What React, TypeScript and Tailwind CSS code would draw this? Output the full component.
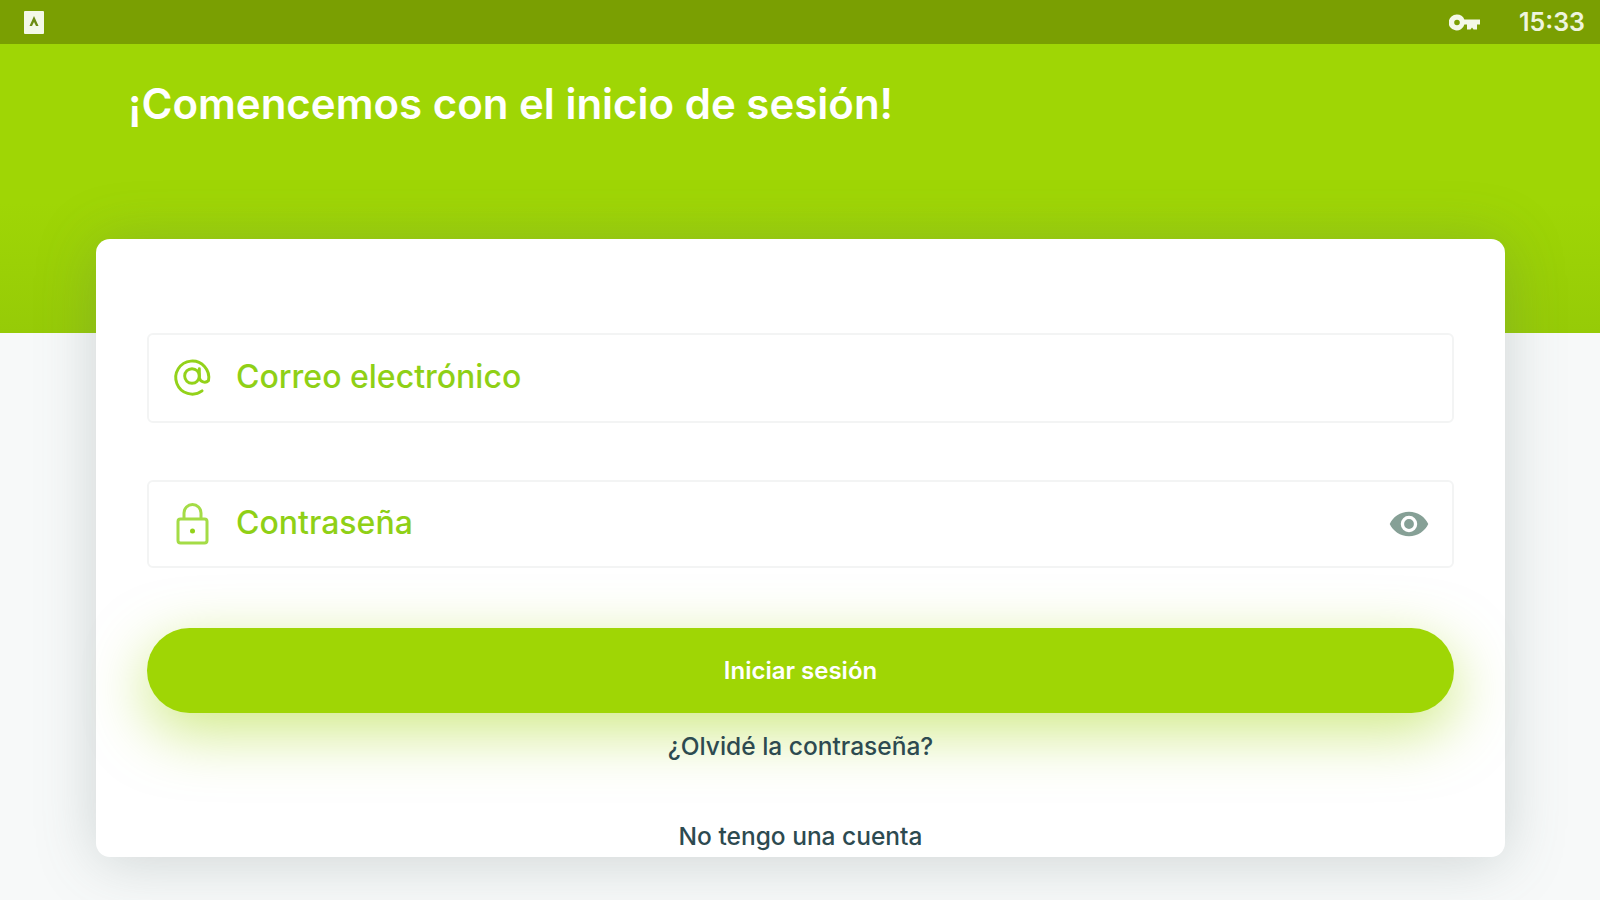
export default function App() {
  return (
    <div className="w-[1600px] h-[900px] overflow-hidden bg-[#f7f9f9] flex flex-col font-['Inter',sans-serif]">
      <div className="h-[44px] shrink-0 bg-[#7a9f02] flex items-center justify-between pl-[23px] pr-[15px]">
        <svg width="22" height="25" viewBox="0 0 22 25" className="block">
          <path d="M2 1h18a1 1 0 0 1 1 1v21a1 1 0 0 1-1 1H2a1 1 0 0 1-1-1V2a1 1 0 0 1 1-1z" fill="#f4f8e8" />
          <path d="M11 6l4.500 10h-2.500L11 12l-2 4H6.500z" fill="#6d8c14" />
        </svg>
        <div className="flex items-center gap-[39px]">
          <svg width="31" height="17" viewBox="0 0 31 17" className="block">
            <path fillRule="evenodd" d="M8 0.500a8 8 0 0 1 7.400 5H31v5h-3v5h-3.500l-1.500-2-1.500 2H18v-5h-2.600A8 8 0 1 1 8 0.500zm0 5.200a2.800 2.800 0 1 0 0 5.600 2.800 2.800 0 0 0 0-5.600z" fill="#f4f8e8" />
          </svg>
          <span className="text-[25px] leading-none font-semibold text-[#eef4de]">15:33</span>
        </div>
      </div>
      <div className="h-[289px] shrink-0 bg-[linear-gradient(to_bottom,#9fd605_0%,#9fd605_55%,#96cb07_100%)] pl-[128px] pt-[36px]">
        <h1 className="text-[42px] leading-[48px] font-semibold text-white m-0">¡Comencemos con el inicio de sesión!</h1>
      </div>
      <div className="relative ml-[96px] mr-[95px] -mt-[94px] h-[618px] shrink-0 rounded-[14px] bg-white shadow-[0_4px_60px_rgba(90,110,110,0.26)] px-[51px] pt-[94px] flex flex-col items-stretch">
        <div className="h-[90px] rounded-[6px] border-2 border-[#f3f4f4] flex items-center pl-[21px] pr-[22px]">
          <svg width="44" height="44" viewBox="0 0 24 24" fill="none" stroke="#93d21a" strokeWidth="1.6" strokeLinecap="round" strokeLinejoin="round" className="block shrink-0 -mt-[4px]">
            <circle cx="12" cy="12" r="4" />
            <path d="M16 8v5a3 3 0 0 0 5 1.500 9 9 0 1 0-3.500 5.600" />
          </svg>
          <span className="ml-[22px] text-[32px] font-medium text-[#8fd016] leading-none -mt-[3px]">Correo electrónico</span>
        </div>
        <div className="mt-[57px] h-[88px] rounded-[6px] border-2 border-[#f3f4f4] flex items-center pl-[23px] pr-[22px]">
          <svg width="42" height="42" viewBox="0 0 42 42" fill="none" stroke="#a4dc46" strokeWidth="3" className="block shrink-0">
            <rect x="6" y="16" width="29" height="24" rx="2.500" />
            <path d="M12 16v-6a8.500 8.500 0 0 1 17 0v6" />
            <circle cx="20.500" cy="28" r="2.500" fill="#93d21a" stroke="none" />
          </svg>
          <span className="ml-[22px] text-[32px] font-medium text-[#8fd016] leading-none -mt-[3px]">Contraseña</span>
          <svg width="42" height="42" viewBox="0 0 24 24" className="block shrink-0 ml-auto">
            <path fillRule="evenodd" d="M12 5C7 5 2.700 8.100 1 12c1.700 3.900 6 7 11 7s9.300-3.100 11-7c-1.700-3.900-6-7-11-7zm0 11.700a4.700 4.700 0 1 1 0-9.400 4.700 4.700 0 0 1 0 9.400zM12 9.200a2.800 2.800 0 1 0 0 5.600 2.800 2.800 0 0 0 0-5.600z" fill="#86a096" />
          </svg>
        </div>
        <button className="mt-[60px] h-[85px] rounded-full bg-[#9fd605] shadow-[0_18px_60px_rgba(159,214,5,0.5)] text-white text-[24px] font-semibold border-0 flex items-center justify-center">
          Iniciar sesión
        </button>
        <p className="mt-[18px] text-center text-[24.500px] leading-[30px] font-medium text-[#2d4a50] m-0">¿Olvidé la contraseña?</p>
        <p className="mt-[60px] text-center text-[24.500px] leading-[30px] font-medium text-[#2d4a50] m-0">No tengo una cuenta</p>
      </div>
    </div>
  );
}
